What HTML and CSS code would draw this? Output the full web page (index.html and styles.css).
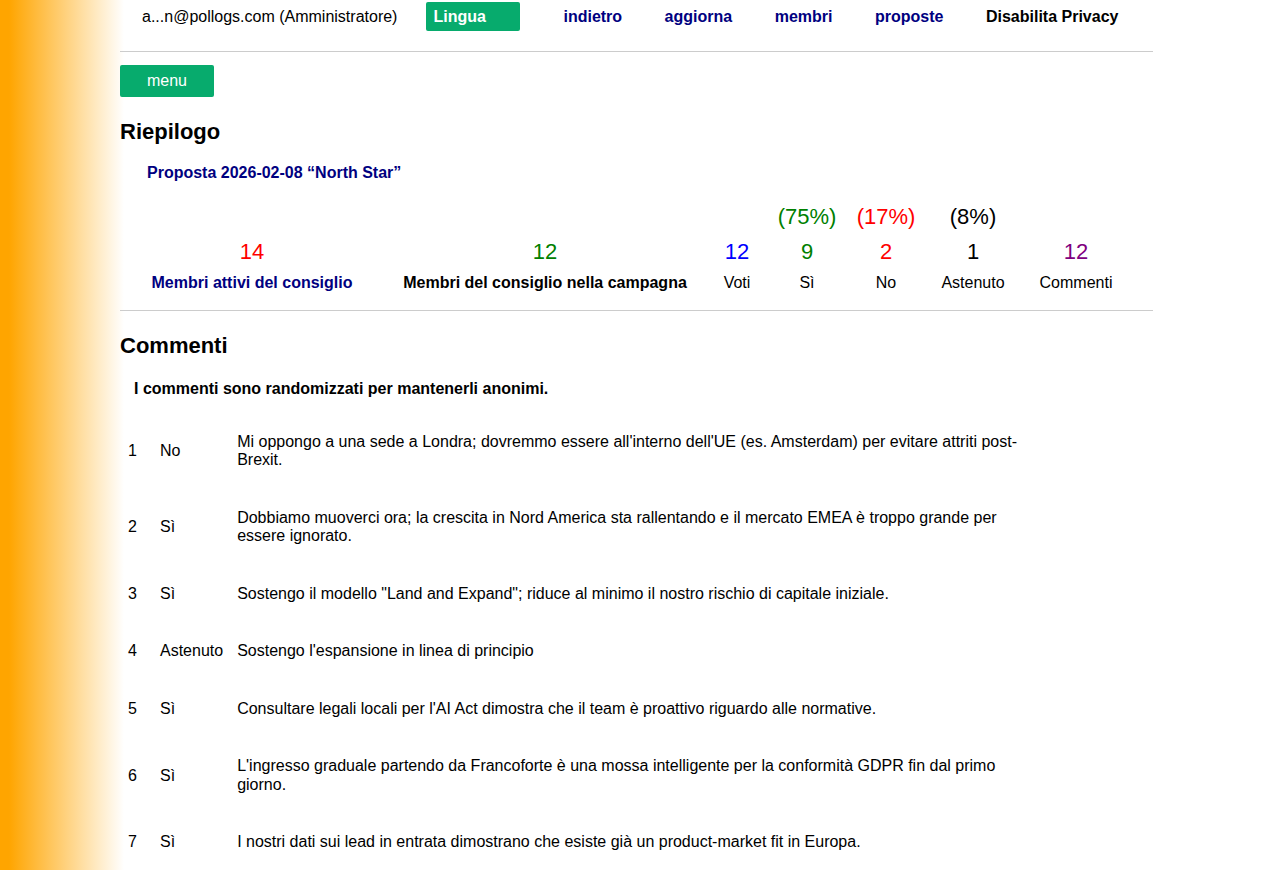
FILE: index.html
```html
<!DOCTYPE html>
<html lang="it">
<head>
<meta charset="utf-8">
<title>Riepilogo</title>
<link rel="stylesheet" href="styles.css">
</head>
<body>
<div class="page">
  <div class="nav">
    <span class="user">a...n@pollogs.com (Amministratore)</span>
    <span class="lang">Lingua</span>
    <a class="link first" href="#">indietro</a>
    <a class="link" href="#">aggiorna</a>
    <a class="link" href="#">membri</a>
    <a class="link" href="#">proposte</a>
    <a class="link privacy" href="#">Disabilita Privacy</a>
  </div>
  <hr class="sep top-sep">
  <div class="menu-btn">menu</div>

  <h2 class="title first-title">Riepilogo</h2>
  <div class="proposal">Proposta 2026-02-08 “North Star”</div>

  <div class="stats">
    <div class="pct"></div><div class="pct"></div><div class="pct"></div>
    <div class="pct green">(75%)</div>
    <div class="pct red">(17%)</div>
    <div class="pct black">(8%)</div>
    <div class="pct"></div>

    <div class="num red">14</div>
    <div class="num green">12</div>
    <div class="num blue">12</div>
    <div class="num green">9</div>
    <div class="num red">2</div>
    <div class="num black">1</div>
    <div class="num purple">12</div>

    <div class="lbl navy-b">Membri attivi del consiglio</div>
    <div class="lbl black-b">Membri del consiglio nella campagna</div>
    <div class="lbl">Voti</div>
    <div class="lbl">Sì</div>
    <div class="lbl">No</div>
    <div class="lbl">Astenuto</div>
    <div class="lbl">Commenti</div>
  </div>
  <hr class="sep mid-sep">

  <h2 class="title second-title">Commenti</h2>
  <div class="note">I commenti sono randomizzati per mantenerli anonimi.</div>

  <table class="comments">
    <tr><td class="n">1</td><td class="v">No</td><td class="t">Mi oppongo a una sede a Londra; dovremmo essere all'interno dell'UE (es. Amsterdam) per evitare attriti post-Brexit.</td></tr>
    <tr><td class="n">2</td><td class="v">Sì</td><td class="t">Dobbiamo muoverci ora; la crescita in Nord America sta rallentando e il mercato EMEA è troppo grande per essere ignorato.</td></tr>
    <tr><td class="n">3</td><td class="v">Sì</td><td class="t">Sostengo il modello "Land and Expand"; riduce al minimo il nostro rischio di capitale iniziale.</td></tr>
    <tr><td class="n">4</td><td class="v">Astenuto</td><td class="t">Sostengo l'espansione in linea di principio</td></tr>
    <tr><td class="n">5</td><td class="v">Sì</td><td class="t">Consultare legali locali per l'AI Act dimostra che il team è proattivo riguardo alle normative.</td></tr>
    <tr><td class="n">6</td><td class="v">Sì</td><td class="t">L'ingresso graduale partendo da Francoforte è una mossa intelligente per la conformità GDPR fin dal primo giorno.</td></tr>
    <tr><td class="n">7</td><td class="v">Sì</td><td class="t">I nostri dati sui lead in entrata dimostrano che esiste già un product-market fit in Europa.</td></tr>
  </table>
</div>
</body>
</html>
```

FILE: styles.css
```css
html {
  background: linear-gradient(to right, #ffa500 0px, #ffa500 9px, #ffffff 124px) no-repeat;
  background-attachment: fixed;
  background-color: #fff;
}

body {
  margin: 0;
  font-family: "Liberation Sans", Arial, Helvetica, sans-serif;
  font-size: 16px;
  color: #000;
}

.page {
  margin-left: 120px;
  width: 1033px;
}

.nav {
  display: flex;
  align-items: center;
  height: 33px;
}

.user {
  margin-left: 22px;
  line-height: 18px;
}

.lang {
  margin-left: 29px;
  width: 94px;
  height: 29px;
  box-sizing: border-box;
  padding: 6px 7px 0;
  background: #07ab6d;
  color: #fff;
  font-weight: bold;
  border-radius: 2px;
  line-height: 18px;
}

.link {
  font-weight: bold;
  color: #000080;
  text-decoration: none;
  margin-left: 42.5px;
  line-height: 18px;
}

.link.first {
  margin-left: 43px;
}

.link.privacy {
  color: #000;
}

.sep {
  border: 0;
  border-top: 1px solid #cccccc;
  margin: 0;
  height: 0;
}

.top-sep {
  margin-top: 18px;
}

.menu-btn {
  margin-top: 13px;
  width: 94px;
  height: 32px;
  background: #07ab6d;
  color: #fff;
  border-radius: 2px;
  text-align: center;
  line-height: 31px;
  font-size: 16px;
}

.title {
  margin: 0;
  font-size: 22px;
  line-height: 26px;
  font-weight: bold;
}

.first-title {
  margin-top: 22px;
}

.proposal {
  margin-top: 19px;
  padding-left: 27px;
  line-height: 18px;
  font-weight: bold;
  color: #000080;
}

.stats {
  margin-top: 17px;
  display: grid;
  grid-template-columns: 264px 322px 62px 78px 80px 94px 112px;
  grid-template-rows: 35px 35px 27px;
  text-align: center;
}

.pct, .num {
  font-size: 22px;
  line-height: 35px;
}

.lbl {
  line-height: 27px;
  white-space: nowrap;
}

.navy-b {
  color: #000080;
  font-weight: bold;
}

.black-b {
  font-weight: bold;
}

.red { color: #ff0000; }
.green { color: #008000; }
.blue { color: #0000ff; }
.black { color: #000; }
.purple { color: #800080; }

.mid-sep {
  margin-top: 14px;
}

.second-title {
  margin-top: 22px;
}

.note {
  margin-top: 21px;
  padding-left: 14px;
  font-weight: bold;
  line-height: 18px;
}

.comments {
  margin-top: 15px;
  margin-left: 1px;
  border-collapse: collapse;
}

.comments td {
  padding: 19.6px 7px;
  vertical-align: middle;
  line-height: 18.4px;
}

.comments td.n {
  min-width: 18px;
}

.comments td.t {
  width: 790px;
}
```
